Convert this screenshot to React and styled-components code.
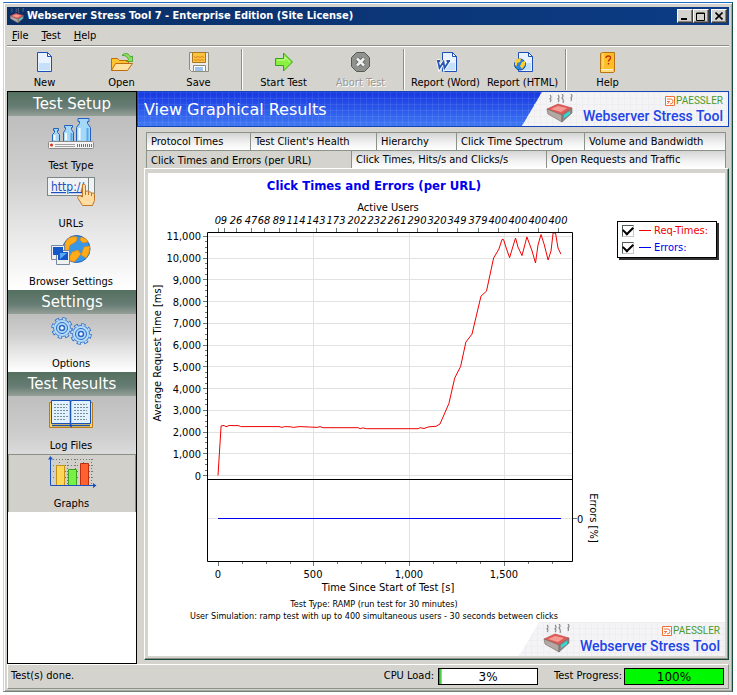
import React, {useState} from 'react';
import styled, {createGlobalStyle, css} from 'styled-components';

const GlobalStyle = createGlobalStyle`
  * {
    box-sizing: border-box;
  }

  body {
    margin: 0;
    background: #fff;
    color: #000;
    font-family: "DejaVu Sans Condensed", "DejaVu Sans", sans-serif;
    font-size: 11px;
    line-height: 14px;
  }

  button {
    margin: 0;
    padding: 0;
    border: none;
    background: none;
    color: inherit;
    font: inherit;
    cursor: default;
  }
`;

const Window = styled.div`
  display: flex;
  flex-direction: column;
  min-height: calc(100vh - 5px);
  margin: 2px 4px 3px 3px;
  padding: 4px 3px 2px;
  border: 1px solid #6f7f74;
  border-top-color: #1c6fc4;
  border-left-color: #d4d2cd;
  border-right-color: #17493f;
  box-shadow: inset 1px 1px #fff, inset -1px -1px #a9aaa4;
  background: #d5d3ce;
`;

const TitleBar = styled.header`
  display: flex;
  align-items: center;
  height: 18px;
  padding: 0 2px;
  background: linear-gradient(to right, #0a2f66, #0c3c86);
  color: #fff;

  h1 {
    flex: 1;
    margin: 0 0 0 2px;
    font-size: 11px;
    line-height: 18px;
    font-weight: bold;
    white-space: nowrap;
  }
`;

const CaptionButton = styled.button`
  display: flex;
  align-items: center;
  justify-content: center;
  width: 16px;
  height: 14px;
  margin-left: ${props => (props.$spaced ? '2px' : '0')};
  border: 1px solid #404040;
  border-top-color: #fff;
  border-left-color: #fff;
  box-shadow: inset -1px -1px #808080;
  background: #d5d3ce;
`;

const MenuBar = styled.nav`
  display: flex;
  gap: 13px;
  height: 21px;
  padding: 4px 5px 0;
  border-bottom: 1px solid #8c8f88;

  button {
    height: 14px;
  }
`;

const ToolBar = styled.div`
  display: flex;
  height: 45px;
  border-top: 1px solid #fff;
`;

const Separator = styled.span`
  width: 2px;
  margin: 2px 3px 1px;
  border-left: 1px solid #8c8f88;
  border-right: 1px solid #fff;
`;

const ToolButton = styled.button`
  display: flex;
  flex-direction: column;
  align-items: center;
  width: 77px;
  padding: 5px 2px 0 0;
  white-space: nowrap;

  svg {
    margin-bottom: 2px;
  }

  &:disabled {
    color: #9a9993;
    text-shadow: 1px 1px #fff;
  }
`;

const Main = styled.div`
  display: flex;
  flex: 1;
`;

const SideBar = styled.aside`
  width: 130px;
  flex: none;
  border: 1px solid #000;
  background: #fff;
`;

const SideTitle = styled.h2`
  height: 24px;
  margin: 0;
  background: linear-gradient(#54705f, #667c74 60%, #94a097);
  color: #fff;
  font-family: "DejaVu Sans", sans-serif;
  font-size: 15px;
  line-height: 25px;
  font-weight: normal;
  text-align: center;
`;

const SideGroup = styled.div`
  background: linear-gradient(#bebebf, #cfcfcf 35%, #e6e6e7 65%, #fff);
`;

const SideItem = styled.button`
  display: flex;
  flex-direction: column;
  align-items: center;
  width: 100%;
  height: 58px;
  padding: 2px 2px 0 0;

  svg {
    margin-bottom: 7px;
  }

  ${props => props.$active && css`
    padding: 1px 1px 0 0;
    border: 1px solid #8a9086;
    border-bottom: none;
    background: #d2d0ca;
  `}
`;

const Content = styled.main`
  display: flex;
  flex: 1;
  flex-direction: column;
  min-width: 0;
`;

const Banner = styled.div`
  display: flex;
  justify-content: space-between;
  height: 36px;
  border: 1px solid #1544b8;
  background-color: #2a52ee;
  background-image:
    repeating-linear-gradient(to right, rgba(255, 255, 255, .08) 0 1px, transparent 1px 6px),
    repeating-linear-gradient(to bottom, rgba(255, 255, 255, .08) 0 1px, transparent 1px 6px),
    linear-gradient(#1637e2, #3f78f4);

  h2 {
    margin: 0;
    padding-left: 6px;
    color: #fff;
    font-family: "DejaVu Sans", sans-serif;
    font-size: 16px;
    line-height: 35px;
    font-weight: normal;
    white-space: nowrap;
  }
`;

const LogoBox = styled.div`
  display: flex;
  align-items: center;
  justify-content: flex-end;
  width: 206px;
  height: 34px;
  padding-right: 5px;
  clip-path: polygon(20px 0, 100% 0, 100% 100%, 0 100%);
  background-color: #f4f4f6;
  background-image:
    repeating-linear-gradient(to right, #eeeef1 0 1px, transparent 1px 6px),
    repeating-linear-gradient(to bottom, #eeeef1 0 1px, transparent 1px 6px);

  svg {
    flex: none;
  }
`;

const LogoText = styled.div`
  display: flex;
  flex-direction: column;
  align-items: flex-end;
  margin-left: 8px;
  color: #2244e8;
  font-family: Roboto, sans-serif;
  font-size: 14px;
  line-height: 17px;
  font-weight: 500;
  white-space: nowrap;

  span {
    display: flex;
    align-items: center;
    gap: 1px;
    color: #4a9a2c;
    font-size: 10px;
    line-height: 14px;
    font-weight: normal;
  }
`;

const Tabs = styled.div`
  margin: 5px 3px 0 9px;
`;

const TabRow = styled.div`
  display: flex;
  height: 18px;
  border-left: 1px solid #8b9389;
`;

const Tab = styled.button`
  flex: ${props => props.$size} 1 ${props => props.$size}px;
  height: 18px;
  padding: 0 4px;
  border-top: 1px solid #8b9389;
  border-right: 1px solid #8b9389;
  background: linear-gradient(#d4d4d4, #f2f2f2 60%, #fff);
  text-align: left;
  white-space: nowrap;

  ${props => props.$active && css`
    padding-top: 3px;
    background: #d5d3ce;
  `}
`;

const Panel = styled.section`
  flex: 1;
  display: flex;
  margin: 0 0 4px 7px;
  padding: 4px 3px 3px;
  border: 1px solid #17493f;
  border-top-color: #fff;
  border-left-color: #fff;
  box-shadow: inset -1px -1px #8b8f88;
`;

const Sheet = styled.div`
  flex: 1;
  display: flex;
  flex-direction: column;
  justify-content: space-between;
  background: #fff;
`;

const Report = styled.div`
  display: flex;
`;

const Figure = styled.figure`
  flex: 1;
  min-width: 0;
  margin: 0;
  padding-top: 5px;
  text-align: center;

  h3 {
    margin: 0;
    color: #0000f0;
    font-size: 13px;
    line-height: 16px;
  }

  svg {
    display: block;
    width: 100%;
    height: auto;
    margin-top: 6px;
    overflow: visible;
  }

  figcaption {
    margin-top: 4px;
    font-size: 9px;
    line-height: 12px;
    white-space: nowrap;
  }
`;

const LegendColumn = styled.div`
  width: 125px;
  padding: 48px 8px 0 17px;
`;

const Legend = styled.div`
  padding: 0 4px 1px;
  border: 1px solid #000;
  box-shadow: 2px 2px #333;
  background: #fff;
`;

const LegendItem = styled.label`
  display: flex;
  align-items: center;
  height: 17px;
  color: ${props => props.$color};
  white-space: nowrap;

  &::before {
    content: "";
    order: 1;
    width: 12px;
    margin: 0 3px 0 5px;
    border-top: 1px solid ${props => props.$color};
  }

  span {
    order: 2;
  }
`;

const CheckBox = styled.input`
  appearance: none;
  flex: none;
  display: grid;
  place-items: center;
  width: 12px;
  height: 12px;
  margin: 0;
  border: 1px solid #c8c8c4;
  border-top-color: #505c56;
  border-left-color: #505c56;
  background: #fff;

  &:checked::before {
    content: "";
    width: 8px;
    height: 5px;
    margin-top: -3px;
    border: solid #000;
    border-width: 0 0 2px 2px;
    transform: rotate(-45deg);
  }
`;

const SheetFooter = styled.div`
  display: flex;
  justify-content: flex-end;
`;

const StatusBar = styled.footer`
  display: flex;
  align-items: center;
  height: 25px;
  padding: 0 4px 1px 3px;
  border: 1px solid #8b9389;
  border-top-color: #fff;
  border-left-color: #fff;

  p {
    flex: 1;
    margin: 0;
  }
`;

const StatusLabel = styled.span`
  margin: 0 ${props => props.$gap} 0 16px;
`;

const Gauge = styled.div`
  position: relative;
  width: 100px;
  height: 17px;
  border: 1px solid #000;
  background: #fff;
  font-family: "DejaVu Sans", sans-serif;
  font-size: 12px;
  line-height: 16px;
  text-align: center;

  i {
    position: absolute;
    top: 0;
    left: 0;
    bottom: 0;
    background: ${props => props.$fill};
  }

  span {
    position: relative;
  }
`;

/* Icons */

const Page = ({x = 0}) => (
  <g transform={`translate(${x} 0)`}>
    <path d="M.5 .5h10l4 4v15h-14z" fill="#e8f3ff" stroke="#1c50b8" />
    <path d="M2 11h11v7H2z" fill="#c4e0fb" />
    <path d="M10.500 .5v4h4z" fill="#fff" stroke="#1c50b8" />
  </g>
);

const NewIcon = () => (
  <svg width="24" height="22" viewBox="0 0 24 22"><Page x={4} /></svg>
);

const OpenIcon = () => (
  <svg width="24" height="22" viewBox="0 0 24 22">
    <path d="M1.500 18.500V6.500h6l2 2h9v4" fill="#ffc42e" stroke="#c26a10" />
    <path d="M1.500 18.500l4-7h17l-5 7z" fill="#ffe2a0" stroke="#c26a10" />
    <path d="M12 3.500c3-3.500 7-2 8.500 1.500l2-1v5.500h-6l2-2c-1-3-4-4.500-6.500-4z" fill="#8be05c" stroke="#3d9a28" strokeWidth=".8" />
  </svg>
);

const SaveIcon = () => (
  <svg width="24" height="22" viewBox="0 0 24 22">
    <path d="M2.500 .5h19v19h-17l-2-2z" fill="#ececec" stroke="#8c8c7c" />
    <path d="M5.500 .5h13v10h-13z" fill="#ffc23c" stroke="#a87820" />
    <path d="M7 4.500l2 1 2-1 2 1 2-1 2 1M7 7.500l2 1 2-1 2 1 2-1 2 1" fill="none" stroke="#d88820" />
    <path d="M6.500 13.500h12v6h-12z" fill="#fff" stroke="#8c8c7c" />
    <path d="M8 15h8v4H8z" fill="#9cc4ee" />
  </svg>
);

const StartIcon = () => (
  <svg width="24" height="22" viewBox="0 0 24 22">
    <path d="M3.500 6.500h8V1L20.500 10l-9 9v-5.500h-8z" fill="#8cf040" stroke="#35a020" />
    <path d="M5 8h8V5l4.500 5" fill="none" stroke="#ccff9c" />
  </svg>
);

const AbortIcon = () => (
  <svg width="24" height="22" viewBox="0 0 24 22">
    <path d="M7.500 .5h8l5 5v9l-5 5h-8l-5-5v-9z" fill="#8e918c" stroke="#555a56" />
    <path d="M8 6.500l7 7M15 6.500l-7 7" stroke="#666" strokeWidth="4.500" />
    <path d="M8 6.500l7 7M15 6.500l-7 7" stroke="#f0f0f0" strokeWidth="2.500" />
  </svg>
);

const WordIcon = () => (
  <svg width="24" height="22" viewBox="0 0 24 22">
    <Page x={8} />
    <path d="M4 9l1.500 7 4-6 1 6 4.500-7M3 9h3M12.500 9h3.500" fill="none" stroke="#fff" strokeWidth="3.500" />
    <path d="M4 9l1.500 7 4-6 1 6 4.500-7M3 9h3M12.500 9h3.500" fill="none" stroke="#2858b4" strokeWidth="1.800" />
  </svg>
);

const HtmlIcon = () => (
  <svg width="24" height="22" viewBox="0 0 24 22">
    <Page x={7} />
    <circle cx="9" cy="12.500" r="5.500" fill="#2e86dc" stroke="#1c50a0" />
    <path d="M4 9c2-3 5-3 6-2l-1 3-3 1v3l-2-1zM11 10l3-1v4l-3 4-2-3z" fill="#ffd030" />
  </svg>
);

const HelpIcon = () => (
  <svg width="24" height="22" viewBox="0 0 24 22">
    <path d="M4.500 1.500l2-1h12v19l-1 1h-13z" fill="#ffbe28" stroke="#b87414" />
    <path d="M7 1v15" stroke="#ffe898" />
    <path d="M5 17.500h12M5 19h12" stroke="#fff4d0" />
    <path d="M10 6c0-3 5-2.500 4.500 0 0 1.500-2 1.500-2 3.500M12.500 11v1.500" fill="none" stroke="#c03010" strokeWidth="1.500" />
  </svg>
);

const WeightsIcon = () => (
  <svg width="48" height="34" viewBox="0 0 48 34">
    <g fill="#a4d8f8" stroke="#2460c0">
      <path d="M5.500 23.500v-7l2-2v-2h-1v-2h5v2h-1v2l2 2v7z" />
      <path d="M16.500 23.500v-9l2-3v-2h-1v-2h8v2h-1v2l2 3v9z" />
      <path d="M29.500 23.500V9.500l3-4v-2h-1.500V.5h11v3h-1.500v2l3 4v14z" />
    </g>
    <path d="M7.500 17v5M19 15v7M32.500 10v12" stroke="#fff" strokeWidth="2" />
    <path d="M24.500 15v8M40.500 10v13" stroke="#58a8ec" strokeWidth="2" />
    <rect x="1.500" y="23.500" width="45" height="7" rx="1" fill="#f4f4f4" stroke="#8a8a88" />
    <circle cx="4.500" cy="27" r="1.500" fill="#d83020" />
    <path d="M8 26.500h20M8 28.500h20" stroke="#a0a0a0" />
    <path d="M30 27.500h15" stroke="#707070" strokeWidth="3" strokeDasharray="1 1" />
  </svg>
);

const UrlIcon = () => (
  <svg width="50" height="34" viewBox="0 0 50 34">
    <rect x="1.500" y="1.500" width="47" height="18" fill="#f0f2f4" stroke="#7c8684" />
    <path d="M42.500 2v14" stroke="#7c8684" />
    <text x="5" y="15" fontSize="12" fill="#1c50c0" textDecoration="underline">http://</text>
    <path d="M36.500 8.500q2-1.500 3 1v6q2-1.500 3 .5 2-1 3 1 3-.5 3 1.500v6l-2 5h-10l-5-8q1-3 5-.5z" fill="#ffdca0" stroke="#c07428" />
    <path d="M39.500 15v4M42.500 16v3M45.500 17v3" stroke="#c07428" />
  </svg>
);

const GlobeIcon = () => (
  <svg width="42" height="34" viewBox="0 0 42 34">
    <circle cx="26.500" cy="15" r="13.500" fill="#3898e8" stroke="#2060b0" />
    <path d="M15 9q4-8 12-6 1 4-3 6l-4 2-1 5-4 1zM31 3q6 1 7 5l-5 1-3-3zM34 13l6-1q0 8-4 12l-5-3zM22 18l6-2 3 4-4 5-3 3-6-2z" fill="#ffac18" stroke="#d88010" strokeWidth=".6" />
    <g fill="#f0f0f0" stroke="#7888a0">
      <path d="M1.500 11.500h13v14h-13z" />
      <path d="M6.500 16.500h13v14h-13z" />
    </g>
    <path d="M3 13h10v8H3zM8 18h10v8H8z" fill="#1458c8" />
    <path d="M10 19h7l-7 6z" fill="#58a8f8" />
  </svg>
);

const Gear = ({cx, cy}) => (
  <g transform={`translate(${cx} ${cy})`}>
    <circle r="9" fill="none" stroke="#2868c4" strokeWidth="3.500" strokeDasharray="4 3.070" />
    <circle r="8.500" fill="#b4dcfa" stroke="#2868c4" strokeWidth=".8" />
    <circle r="9" fill="none" stroke="#b4dcfa" strokeWidth="2" strokeDasharray="2.600 4.470" strokeDashoffset="-.7" />
    <circle r="5.500" fill="none" stroke="#2868c4" />
    <circle r="2.500" fill="#f0f6fa" stroke="#2868c4" strokeWidth="1.500" />
  </g>
);

const GearsIcon = () => (
  <svg width="42" height="34" viewBox="0 0 42 34">
    <Gear cx={12} cy={12} />
    <Gear cx={31} cy={18} />
  </svg>
);

const BookIcon = () => (
  <svg width="46" height="34" viewBox="0 0 46 34">
    <path d="M1.500 4.500h43v25h-43z" fill="#ffd458" stroke="#b87c1c" />
    <path d="M3.500 2.500h19l.5 1 .5-1h19v23h-19l-.5 1-.5-1h-19z" fill="#e0f2ff" stroke="#1850b4" />
    <path d="M4 27.500h18l1 1 1-1h18M22.500 3v25" fill="none" stroke="#1850b4" strokeWidth="1.500" />
    <path d="M6 6.500h14M6 9.500h13M6 12.500h14M6 15.500h12M6 18.500h14M6 21.500h12M26 6.500h13M26 9.500h14M26 12.500h13M26 15.500h14M26 18.500h12M26 21.500h13" stroke="#7c8c98" strokeDasharray="2 1" />
  </svg>
);

const GraphIcon = () => (
  <svg width="50" height="34" viewBox="0 0 50 34">
    <path d="M6 3.500h42M6 9.500h42M6 15.500h42M6 21.500h42M12.500 3v26M20.500 3v26M28.500 3v26M36.500 3v26M44.500 3v26" stroke="#777" strokeDasharray="1 2" />
    <path d="M9.500 9.500h8v20h-8z" fill="#ffd858" stroke="#c89018" />
    <path d="M21.500 13.500h8v16h-8z" fill="#78f048" stroke="#40a020" />
    <path d="M33.500 7.500h8v22h-8z" fill="#ff6030" stroke="#b83010" />
    <path d="M3.500 2v27.500H47" fill="none" stroke="#1850c0" />
    <path d="M1 3.500L3.500 0l2.500 3.500zM46 27l3.500 2.500L46 32z" fill="#1850c0" />
  </svg>
);

const HotServer = ({size = 30}) => (
  <svg width={size} height={size} viewBox="0 0 30 30">
    <path d="M5 1q2 2 0 4 2 1 0 3M13 1q2 2 0 4 2 1 0 3M17 0q2 2 0 4 2 2 1 5M26 0q2 2 0 4 1 1 0 3" fill="none" stroke="#8c8c8c" strokeWidth="1.200" />
    <path d="M2 15l11-5 14 4-10 7z" fill="#e05c58" stroke="#c04040" strokeWidth=".6" />
    <path d="M6 15l7-3 9 2-6 4z" fill="#f49c94" />
    <path d="M2 15l15 6v7L3 20z" fill="#b4a8a4" stroke="#706460" strokeWidth=".6" />
    <path d="M17 21l10-7v5l-10 9z" fill="#8c8684" stroke="#706460" strokeWidth=".6" />
    <path d="M19 21l6-4v3l-6 4z" fill="#28e0d8" />
  </svg>
);

const Logo = () => (
  <LogoBox>
    <HotServer />
    <LogoText>
      <span>
        <svg width="10" height="10" viewBox="0 0 10 10">
          <path d="M.5 .5h9v9h-9z" fill="#fff" stroke="#ee7038" />
          <path d="M2 3h4q2 0 2 2.500T5 8M2 5.500h2.500M2.500 8L5 5" fill="none" stroke="#ee7038" />
        </svg>
        PAESSLER
      </span>
      Webserver Stress Tool
    </LogoText>
  </LogoBox>
);

/* Chart */

const requestTimes = [
  [0, 0], [16, 2280], [32, 2300], [42, 2240], [58, 2300], [110, 2290], [118, 2250],
  [320, 2250], [335, 2210], [350, 2250], [380, 2240], [395, 2210], [430, 2250],
  [480, 2230], [520, 2210], [535, 2250], [550, 2200], [735, 2200], [745, 2150],
  [760, 2190], [780, 2150], [1050, 2150], [1060, 2200], [1080, 2160], [1106, 2240],
  [1143, 2260], [1164, 2370], [1211, 3310], [1241, 4480], [1272, 5010], [1300, 6140],
  [1332, 6500], [1379, 8250], [1408, 8480], [1445, 10000], [1473, 10410],
  [1489, 10850], [1497, 10850], [1515, 10370], [1529, 10020], [1560, 10920],
  [1573, 10500], [1594, 10110], [1620, 10970], [1647, 10320], [1665, 9770],
  [1678, 10600], [1694, 11080], [1710, 10640], [1731, 9910], [1746, 10320],
  [1757, 11150], [1770, 11150], [1783, 10460], [1798, 10180],
];

const activeUsers = [
  [0, 0], [30, 9], [95, 26], [173, 47], [242, 68], [320, 89], [409, 114], [514, 143],
  [619, 173], [729, 202], [834, 232], [939, 261], [1044, 290], [1149, 320],
  [1254, 349], [1364, 379], [1469, 400], [1574, 400], [1679, 400], [1784, 400],
];

const plot = {left: 59, right: 424, top: 32, middle: 279, bottom: 361};
const timeX = t => Math.round(70 + t * 0.1907);
const valueY = v => 275.5 - v * 0.02175;
const range = (count, step) => Array.from({length: count}, (_, i) => i * step);

function Chart({showTimes, showErrors}) {
  const {left, right, top, middle, bottom} = plot;
  const line = requestTimes.map(([t, v]) => `${(70 + t * 0.1907).toFixed(1)},${valueY(v).toFixed(1)}`).join(' ');

  return (
    <svg viewBox="0 0 452 394" fontSize="11" role="img" aria-label="Click Times and Errors (per URL)">
      <g stroke="#e2e2e2">
        {range(12, 1000).map(v => <path key={v} d={`M${left} ${Math.floor(valueY(v)) + .5}H${right}`} />)}
        {[500, 1000, 1500].map(t => <path key={t} d={`M${timeX(t) + .5} ${top}V${bottom}`} />)}
        <path d={`M${left} 318.5H${right}`} />
      </g>

      <g stroke="#6a7a70">
        {range(12, 1000).map(v => <path key={v} d={`M${left - 4} ${Math.floor(valueY(v)) + .5}h4`} />)}
        {range(45, 250).map(v => <path key={v} d={`M${left - 2} ${Math.floor(valueY(v)) + .5}h2`} />)}
        {range(15, 125).map(t => <path key={t} d={`M${timeX(t) + .5} ${bottom}v${t % 500 ? 3 : 5}`} />)}
        {activeUsers.map(([t]) => <path key={t} d={`M${timeX(t) + .5} ${top - 4}v4`} />)}
        <path d={`M${right} 318.5h5`} />
      </g>

      {showTimes && <polyline points={line} fill="none" stroke="#f00000" />}
      {showErrors && <path d="M70 318.5H413" stroke="#0000f0" />}
      <path d={`M${left + .5} ${top + .5}H${right + .5}V${bottom + .5}H${left + .5}zM${left} ${middle + .5}H${right}`} fill="none" stroke="#000" />

      <g textAnchor="end">
        {range(12, 1000).map(v => (
          <text key={v} x="53" y={Math.round(valueY(v)) + 4}>{v.toLocaleString('en-US')}</text>
        ))}
      </g>
      <g textAnchor="middle">
        {[0, 500, 1000, 1500].map(t => (
          <text key={t} x={timeX(t)} y="378">{t.toLocaleString('en-US')}</text>
        ))}
        <text x="240" y="11">Active Users</text>
        <text x="240" y="391">Time Since Start of Test [s]</text>
        <g fontStyle="italic">
          {activeUsers.map(([t, users]) => <text key={t} x={timeX(t)} y="24">{users}</text>)}
        </g>
        <text transform="translate(13 153) rotate(-90)">Average Request Time [ms]</text>
        <text transform="translate(442 318) rotate(90)">Errors [%]</text>
      </g>
      <text x="429" y="323">0</text>
    </svg>
  );
}

const sideGroups = [
  {title: 'Test Setup', items: [['Test Type', WeightsIcon], ['URLs', UrlIcon], ['Browser Settings', GlobeIcon]]},
  {title: 'Settings', items: [['Options', GearsIcon]]},
  {title: 'Test Results', items: [['Log Files', BookIcon], ['Graphs', GraphIcon]]},
];

const tabRows = [
  [['Protocol Times', 104], ["Test Client's Health", 126], ['Hierarchy', 80], ['Click Time Spectrum', 128], ['Volume and Bandwidth', 141]],
  [['Click Times and Errors (per URL)', 205], ['Click Times, Hits/s and Clicks/s', 195], ['Open Requests and Traffic', 179]],
];

function Tool({icon: Icon, label, disabled}) {
  return (
    <ToolButton type="button" disabled={disabled}>
      <Icon />
      {label}
    </ToolButton>
  );
}

function Progress({label, value, fill}) {
  return (
    <Gauge role="progressbar" aria-label={label} aria-valuenow={value} $fill={fill}>
      <i style={{width: `${value}%`}} />
      <span>{value}%</span>
    </Gauge>
  );
}

function App() {
  const [section, setSection] = useState('Graphs');
  const [tab, setTab] = useState('Click Times and Errors (per URL)');
  const [showTimes, setShowTimes] = useState(true);
  const [showErrors, setShowErrors] = useState(true);

  return (
    <>
      <GlobalStyle />
      <Window>
        <TitleBar>
          <HotServer size={16} />
          <h1>Webserver Stress Tool 7 - Enterprise Edition (Site License)</h1>
          <CaptionButton type="button" aria-label="Minimize">
            <svg width="8" height="8" viewBox="0 0 8 8"><path d="M0 6h6v2H0z" /></svg>
          </CaptionButton>
          <CaptionButton type="button" aria-label="Maximize">
            <svg width="10" height="9" viewBox="0 0 10 9"><path d="M.5 1h8v7.500h-8zM0 1.500h9" fill="none" stroke="#000" /></svg>
          </CaptionButton>
          <CaptionButton type="button" aria-label="Close" $spaced>
            <svg width="8" height="8" viewBox="0 0 8 8"><path d="M.5 .5l7 7M7.500 .5l-7 7" stroke="#000" strokeWidth="1.600" /></svg>
          </CaptionButton>
        </TitleBar>

        <MenuBar>
          {['File', 'Test', 'Help'].map(name => (
            <button type="button" key={name}><u>{name[0]}</u>{name.slice(1)}</button>
          ))}
        </MenuBar>

        <ToolBar role="toolbar">
          <Tool icon={NewIcon} label="New" />
          <Tool icon={OpenIcon} label="Open" />
          <Tool icon={SaveIcon} label="Save" />
          <Separator />
          <Tool icon={StartIcon} label="Start Test" />
          <Tool icon={AbortIcon} label="Abort Test" disabled />
          <Separator />
          <Tool icon={WordIcon} label="Report (Word)" />
          <Tool icon={HtmlIcon} label="Report (HTML)" />
          <Separator />
          <Tool icon={HelpIcon} label="Help" />
        </ToolBar>

        <Main>
          <SideBar>
            {sideGroups.map(group => (
              <React.Fragment key={group.title}>
                <SideTitle>{group.title}</SideTitle>
                <SideGroup>
                  {group.items.map(([name, Icon]) => (
                    <SideItem type="button" key={name} $active={name === section} onClick={() => setSection(name)}>
                      <Icon />
                      {name}
                    </SideItem>
                  ))}
                </SideGroup>
              </React.Fragment>
            ))}
          </SideBar>

          <Content>
            <Banner>
              <h2>View Graphical Results</h2>
              <Logo />
            </Banner>

            <Tabs role="tablist">
              {tabRows.map((row, i) => (
                <TabRow key={i}>
                  {row.map(([name, size]) => (
                    <Tab
                      type="button"
                      role="tab"
                      key={name}
                      aria-selected={name === tab}
                      $size={size}
                      $active={name === tab}
                      onClick={() => setTab(name)}
                    >
                      {name}
                    </Tab>
                  ))}
                </TabRow>
              ))}
            </Tabs>

            <Panel>
              <Sheet>
                <Report>
                  <Figure>
                    <h3>Click Times and Errors (per URL)</h3>
                    <Chart showTimes={showTimes} showErrors={showErrors} />
                    <figcaption>
                      Test Type: RAMP (run test for 30 minutes)<br />
                      User Simulation: ramp test with up to 400 simultaneous users - 30 seconds between clicks
                    </figcaption>
                  </Figure>
                  <LegendColumn>
                    <Legend>
                      <LegendItem $color="#f00000">
                        <CheckBox type="checkbox" checked={showTimes} onChange={() => setShowTimes(!showTimes)} />
                        <span>Req-Times:</span>
                      </LegendItem>
                      <LegendItem $color="#0000f0">
                        <CheckBox type="checkbox" checked={showErrors} onChange={() => setShowErrors(!showErrors)} />
                        <span>Errors:</span>
                      </LegendItem>
                    </Legend>
                  </LegendColumn>
                </Report>
                <SheetFooter>
                  <Logo />
                </SheetFooter>
              </Sheet>
            </Panel>
          </Content>
        </Main>

        <StatusBar>
          <p>Test(s) done.</p>
          <StatusLabel $gap="4px">CPU Load:</StatusLabel>
          <Progress label="CPU Load" value={3} fill="linear-gradient(to right, #0a0, #9e9)" />
          <StatusLabel $gap="2px">Test Progress:</StatusLabel>
          <Progress label="Test Progress" value={100} fill="#00f800" />
        </StatusBar>
      </Window>
    </>
  );
}

export default App;
